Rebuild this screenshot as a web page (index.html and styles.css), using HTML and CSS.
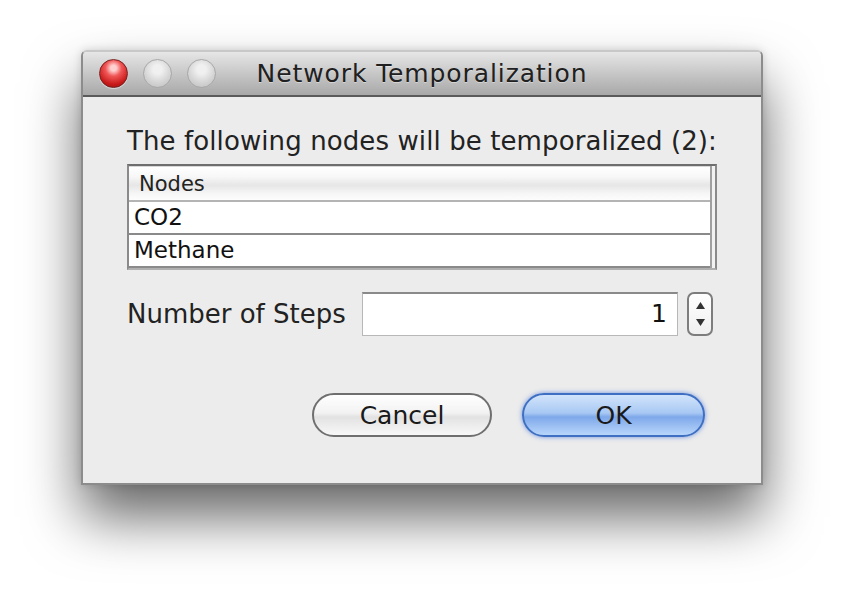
FILE: index.html
```html
<!DOCTYPE html>
<html>
<head>
<meta charset="utf-8">
<link rel="stylesheet" href="styles.css">
</head>
<body>
<div class="stage">
  <div class="window">
    <div class="titlebar">
      <div class="lights">
        <span class="light red"></span>
        <span class="light gray"></span>
        <span class="light gray"></span>
      </div>
      <div class="title">Network Temporalization</div>
      <div></div>
    </div>
    <div class="content">
      <div class="label">The following nodes will be temporalized (2):</div>
      <div class="tableframe">
        <div class="table">
          <div class="th">Nodes</div>
          <div class="td">CO2</div>
          <div class="td">Methane</div>
        </div>
      </div>
      <div class="steps">
        <span class="steps-label">Number of Steps</span>
        <div class="field">1</div>
        <div class="stepper">
          <svg width="9" height="7" viewBox="0 0 9 7"><path d="M4.5 0 L9 7 L0 7 Z" fill="#333"/></svg>
          <svg width="9" height="7" viewBox="0 0 9 7"><path d="M0 0 L9 0 L4.5 7 Z" fill="#333"/></svg>
        </div>
      </div>
      <div class="buttons">
        <div class="btn cancel">Cancel</div>
        <div class="btn ok">OK</div>
      </div>
    </div>
  </div>
</div>
</body>
</html>
```

FILE: styles.css
```css
html, body {
  margin: 0;
  padding: 0;
  background: #ffffff;
}
body {
  width: 843px;
  height: 597px;
  overflow: hidden;
  font-family: "DejaVu Sans", "Liberation Sans", sans-serif;
  color: #1e1e1e;
}
.stage {
  padding: 50px 0 0 81px;
}
.window {
  box-sizing: border-box;
  width: 682px;
  height: 435px;
  border: 2px solid #8c8c8c;
  border-top-color: #c8c8c8;
  border-radius: 6px 6px 0 0;
  background: #ececec;
  box-shadow: 0 32px 55px rgba(0, 0, 0, 0.6), 0 0 8px rgba(0, 0, 0, 0.15);
  display: flex;
  flex-direction: column;
}
.titlebar {
  box-sizing: border-box;
  height: 45px;
  background: linear-gradient(#e6e6e6, #a8a8a8);
  border-bottom: 2px solid #5a5a5a;
  border-radius: 4px 4px 0 0;
  display: grid;
  grid-template-columns: 1fr auto 1fr;
  align-items: center;
}
.lights {
  display: flex;
  gap: 15px;
  padding-left: 16px;
}
.light {
  width: 29px;
  height: 29px;
  border-radius: 50%;
  box-sizing: border-box;
}
.light.red {
  background: radial-gradient(circle at 50% 30%, #ffd0d0 0 12%, #f05656 35%, #c81a1a 70%, #8a1010 100%);
  border: 1px solid #7a2020;
  box-shadow: 0 1px 1px rgba(255,255,255,0.5);
}
.light.gray {
  background: radial-gradient(circle at 50% 35%, #f0f0f0 0 20%, #d4d4d4 60%, #bcbcbc 100%);
  border: 1px solid #a8a8a8;
}
.title {
  font-size: 25px;
  letter-spacing: 0.9px;
  color: #202020;
  text-shadow: 0 1px 0 rgba(255,255,255,0.4);
}
.content {
  flex: 1;
  padding: 29px 44px 0 44px;
  display: flex;
  flex-direction: column;
}
.label {
  font-size: 26px;
  letter-spacing: 0.1px;
  line-height: 30px;
  white-space: nowrap;
  color: #222;
}
.tableframe {
  margin-top: 8px;
  box-sizing: border-box;
  height: 106px;
  border: 2px solid #8a8a8a;
  border-top-color: #6e6e6e;
  border-bottom-color: #b0b0b0;
  background: #f2f2f2;
  padding-right: 3px;
}
.table {
  background: #fff;
  border-right: 2px solid #a0a0a0;
}
.th {
  box-sizing: border-box;
  height: 36px;
  padding-left: 10px;
  font-size: 21px;
  line-height: 34px;
  background: linear-gradient(#ffffff, #f7f7f7 30%, #e6e6e6 55%, #f6f6f6 80%, #fdfdfd);
  border-top: 1px solid #d8d8d8;
  border-bottom: 2px solid #b4b4b4;
  color: #222;
}
.td {
  box-sizing: border-box;
  height: 33px;
  padding-left: 5px;
  font-size: 23px;
  line-height: 31px;
  border-bottom: 2px solid #8a8a8a;
  color: #111;
}
.steps {
  margin-top: 22px;
  display: flex;
  align-items: center;
  height: 44px;
}
.steps-label {
  font-size: 26px;
  color: #222;
  width: 235px;
}
.field {
  box-sizing: border-box;
  width: 316px;
  height: 44px;
  background: #fff;
  border: 1px solid #b8b8b8;
  border-top: 2px solid #8a8a8a;
  font-size: 25px;
  text-align: right;
  padding-right: 10px;
  line-height: 40px;
  color: #111;
}
.stepper {
  box-sizing: border-box;
  margin-left: 9px;
  width: 26px;
  height: 44px;
  border: 2px solid #7d7d7d;
  border-radius: 7px;
  background: linear-gradient(#ffffff, #f0f0f0);
  display: flex;
  flex-direction: column;
  align-items: center;
  justify-content: space-between;
  padding: 8px 0;
}
.buttons {
  margin-top: 57px;
  display: flex;
  justify-content: flex-end;
  gap: 30px;
  padding-right: 12px;
}
.btn {
  box-sizing: border-box;
  height: 44px;
  border-radius: 22px;
  font-size: 25px;
  display: flex;
  align-items: center;
  justify-content: center;
  color: #1a1a1a;
}
.btn.cancel {
  width: 180px;
  border: 2px solid #6f6f6f;
  background: linear-gradient(#ffffff, #f2f2f2 45%, #e2e2e2 55%, #f8f8f8);
}
.btn.ok {
  width: 183px;
  border: 2px solid #3e6fc2;
  background: linear-gradient(#d2e4fb, #a8c8f3 45%, #7ea8ea 55%, #b8d6fb);
  box-shadow: 0 0 5px rgba(60, 110, 220, 0.7);
}
```
